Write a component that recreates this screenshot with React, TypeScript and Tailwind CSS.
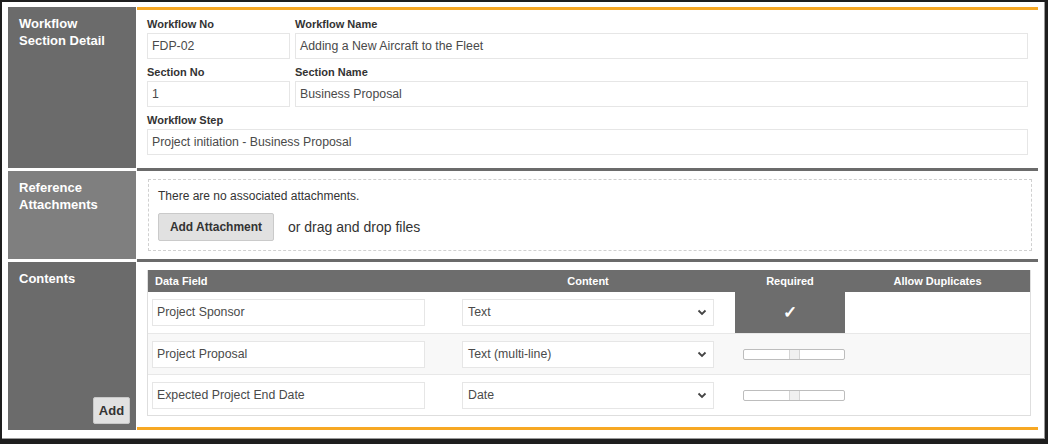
import React from 'react';

const font = { fontFamily: '"Liberation Sans", Arial, sans-serif' };

const Label: React.FC<{ children: React.ReactNode }> = ({ children }) => (
  <div className="h-[22px] flex items-end pb-[2px] text-[11px] leading-[13px] font-bold text-[#333]">{children}</div>
);

const Field: React.FC<{ value: string; className?: string }> = ({ value, className }) => (
  <div className={`h-[26px] border border-[#e6e6e6] bg-white flex items-center px-[4px] text-[12.3px] text-[#4a4a4a] ${className ?? ''}`}>
    {value}
  </div>
);

const Chevron = () => (
  <svg width="10" height="7" viewBox="0 0 10 7" className="shrink-0">
    <path d="M1.5 1.5 L5 5 L8.5 1.5" fill="none" stroke="#444" strokeWidth="1.8" />
  </svg>
);

const Slider = () => (
  <div className="ml-[8px] w-[102px] h-[11px] border border-[#bdbdbd] rounded-[2px] bg-white flex">
    <div className="w-[45px]" />
    <div className="w-[11px] h-full bg-[#f0f0f0] border-x border-[#d4d4d4]" />
  </div>
);

const rows = [
  { field: 'Project Sponsor', content: 'Text', required: true, bg: 'bg-white' },
  { field: 'Project Proposal', content: 'Text (multi-line)', required: false, bg: 'bg-[#f8f8f8]' },
  { field: 'Expected Project End Date', content: 'Date', required: false, bg: 'bg-white' },
];

export default function App() {
  return (
    <div className="w-[1048px] h-[444px] bg-[#1e1e1e] pt-[2px] pl-[2px] pr-[3px] pb-[5px]" style={font}>
      <div className="h-full bg-white border-r border-b border-[#9a9a9a] pt-[5px] pl-[6px] pr-[6px]">
        {/* Workflow Section Detail */}
        <div className="flex h-[161px]">
          <div className="w-[128px] bg-[#6b6b6b] text-white font-bold text-[13px] leading-[17px] pl-[11px] pt-[8px]">
            Workflow<br />Section Detail
          </div>
          <div className="flex-1 ml-[1px] border-t-[3px] border-[#f7a823] px-[10px] pt-[1px]">
            <div className="flex gap-[5px]">
              <div className="w-[143px]">
                <Label>Workflow No</Label>
                <Field value="FDP-02" />
              </div>
              <div className="flex-1">
                <Label>Workflow Name</Label>
                <Field value="Adding a New Aircraft to the Fleet" />
              </div>
            </div>
            <div className="flex gap-[5px]">
              <div className="w-[143px]">
                <Label>Section No</Label>
                <Field value="1" />
              </div>
              <div className="flex-1">
                <Label>Section Name</Label>
                <Field value="Business Proposal" />
              </div>
            </div>
            <Label>Workflow Step</Label>
            <Field value="Project initiation - Business Proposal" />
          </div>
        </div>

        {/* Reference Attachments */}
        <div className="flex h-[91px]">
          <div className="w-[128px] border-t-[3px] border-white bg-[#7f7f7f] text-white font-bold text-[13px] leading-[17px] pl-[11px] pt-[8px]">
            Reference<br />Attachments
          </div>
          <div className="flex-1 ml-[1px] border-t-[3px] border-[#6b6b6b] pl-[11px] pr-[6px] pt-[8px] pb-[8px]">
            <div className="h-full border border-dashed border-[#d0d0d0] px-[9px] pt-[9px]">
              <div className="text-[12px] leading-[14px] text-[#333]">There are no associated attachments.</div>
              <div className="flex items-center mt-[10px]">
                <div className="h-[28px] w-[116px] bg-[#e1e1e1] border border-[#cacaca] rounded-[2px] flex items-center justify-center text-[12px] font-bold text-[#333]">
                  Add Attachment
                </div>
                <span className="ml-[14px] text-[14px] text-[#333]">or drag and drop files</span>
              </div>
            </div>
          </div>
        </div>

        {/* Contents */}
        <div className="flex h-[171px]">
          <div className="w-[128px] border-t-[3px] border-white bg-[#6b6b6b] flex flex-col pl-[11px] pt-[8px] pr-[6px] pb-[6px]">
            <div className="text-white font-bold text-[13px] leading-[17px]">Contents</div>
            <div className="mt-auto self-end h-[27px] w-[37px] bg-[#e1e1e1] border border-[#c8c8c8] rounded-[2px] flex items-center justify-center text-[13px] font-bold text-[#333]">
              Add
            </div>
          </div>
          <div className="flex-1 ml-[1px] border-t-[3px] border-[#6b6b6b] border-b-[3px] border-b-[#f7a823] pl-[10px] pr-[7px] pt-[8px]">
            <div className="border border-[#dedede] border-t-0">
              <div className="flex h-[22px] bg-[#6d6d6d] text-white text-[11px] font-bold items-center">
                <div className="w-[310px] pl-[7px]">Data Field</div>
                <div className="w-[260px] text-center">Content</div>
                <div className="w-[17px]" />
                <div className="w-[110px] text-center">Required</div>
                <div className="flex-1 text-center">Allow Duplicates</div>
              </div>
              {rows.map((r, i) => (
                <div key={r.field} className={`flex h-[41px] items-center ${r.bg} ${i > 0 ? 'border-t border-[#e8e8e8]' : ''}`}>
                  <div className="w-[310px] pl-[4px]">
                    <Field value={r.field} className="w-[273px] h-[27px] px-[3px]" />
                  </div>
                  <div className="w-[260px] px-[4px]">
                    <div className="h-[27px] border border-[#e6e6e6] bg-white flex items-center justify-between pl-[5px] pr-[6px] text-[12.3px] text-[#4a4a4a]">
                      <span>{r.content}</span>
                      <Chevron />
                    </div>
                  </div>
                  <div className="w-[17px]" />
                  <div className="w-[110px] h-full flex items-center">
                    {r.required ? (
                      <div className="w-full h-full bg-[#6d6d6d] text-white flex items-center justify-center text-[17px] font-bold">✓</div>
                    ) : (
                      <Slider />
                    )}
                  </div>
                  <div className="flex-1" />
                </div>
              ))}
            </div>
          </div>
        </div>
      </div>
    </div>
  );
}
